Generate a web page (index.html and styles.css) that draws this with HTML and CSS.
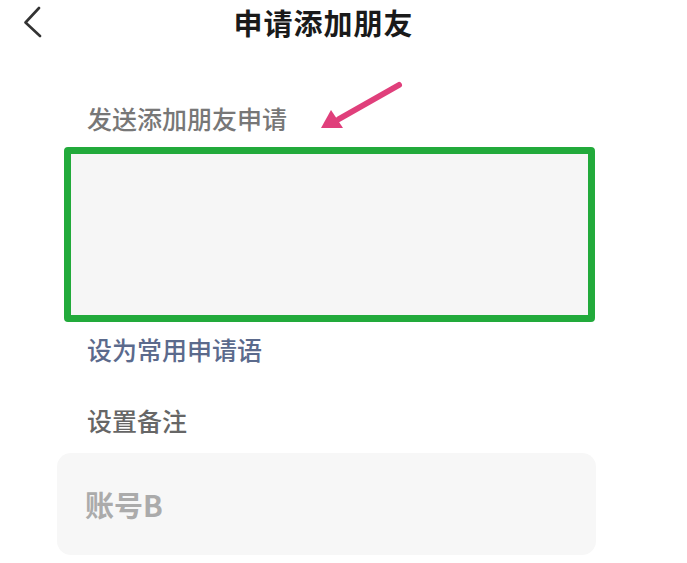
FILE: index.html
```html
<!DOCTYPE html>
<html lang="zh-CN">
<head>
    <meta charset="UTF-8">
    <meta name="viewport" content="width=device-width, initial-scale=1.0">
    <title>申请添加朋友</title>
    <link rel="stylesheet" href="styles.css">
</head>
<body>
    <div class="page">
        <header class="nav">
            <div class="nav-left">
                <svg class="back" width="20" height="32" viewBox="0 0 20 32">
                    <path d="M15 7 L1.5 21.5 L16 35" transform="translate(0 -5)" fill="none" stroke="#333" stroke-width="2.6" stroke-linecap="round" stroke-linejoin="round"/>
                </svg>
            </div>
            <h1 class="title">申请添加朋友</h1>
            <div></div>
        </header>

        <main class="form">
            <!-- 指示箭头 -->
            <svg class="hint-arrow" width="84" height="52" viewBox="0 0 84 52">
                <line x1="78" y1="4" x2="18" y2="38" stroke="#e03f7b" stroke-width="6" stroke-linecap="round"/>
                <polygon points="0,47 10,29 22,47" fill="#e03f7b"/>
            </svg>

            <p class="label">发送添加朋友申请</p>
            <div class="request-box"></div>

            <p class="label label-link">设为常用申请语</p>

            <p class="label label-remark">设置备注</p>
            <div class="remark-box">
                <span class="placeholder">账号B</span>
            </div>
        </main>
    </div>
</body>
</html>
```

FILE: styles.css
```css
* {
    margin: 0;
    padding: 0;
    box-sizing: border-box;
    font-family: 'Noto Sans CJK SC', 'Noto Sans', sans-serif;
}

body {
    background: #fff;
    color: #1a1a1a;
}

.page {
    width: 687px;
    min-height: 563px;
}

.nav {
    height: 44px;
    display: grid;
    grid-template-columns: 1fr auto 1fr;
    align-items: center;
    padding-right: 40px;
}

.nav-left {
    display: flex;
    align-items: center;
    padding-left: 24px;
}

.title {
    font-size: 29px;
    font-weight: 700;
    letter-spacing: 1px;
    line-height: 44px;
    color: #1a1a1a;
}

.form {
    position: relative;
    margin-left: 57px;
    width: 539px;
    padding-top: 62px;
}

.hint-arrow {
    position: absolute;
    left: 264px;
    top: 37px;
}

.label {
    font-size: 25px;
    line-height: 25px;
    font-weight: 500;
    color: #777;
    padding-left: 30px;
}

.request-box {
    margin: 16px 0 0 7px;
    width: 531px;
    height: 175px;
    border: 7px solid #22aa3b;
    border-radius: 4px;
    background: #f6f6f6;
}

.label-link {
    margin-top: 15px;
    color: #5b6a8c;
}

.label-remark {
    margin-top: 46px;
    color: #666;
}

.remark-box {
    margin-top: 20px;
    height: 102px;
    border-radius: 14px;
    background: #f7f7f7;
    display: flex;
    align-items: center;
    padding-left: 28px;
}

.placeholder {
    font-size: 29px;
    font-weight: 700;
    color: #ababab;
}
```
